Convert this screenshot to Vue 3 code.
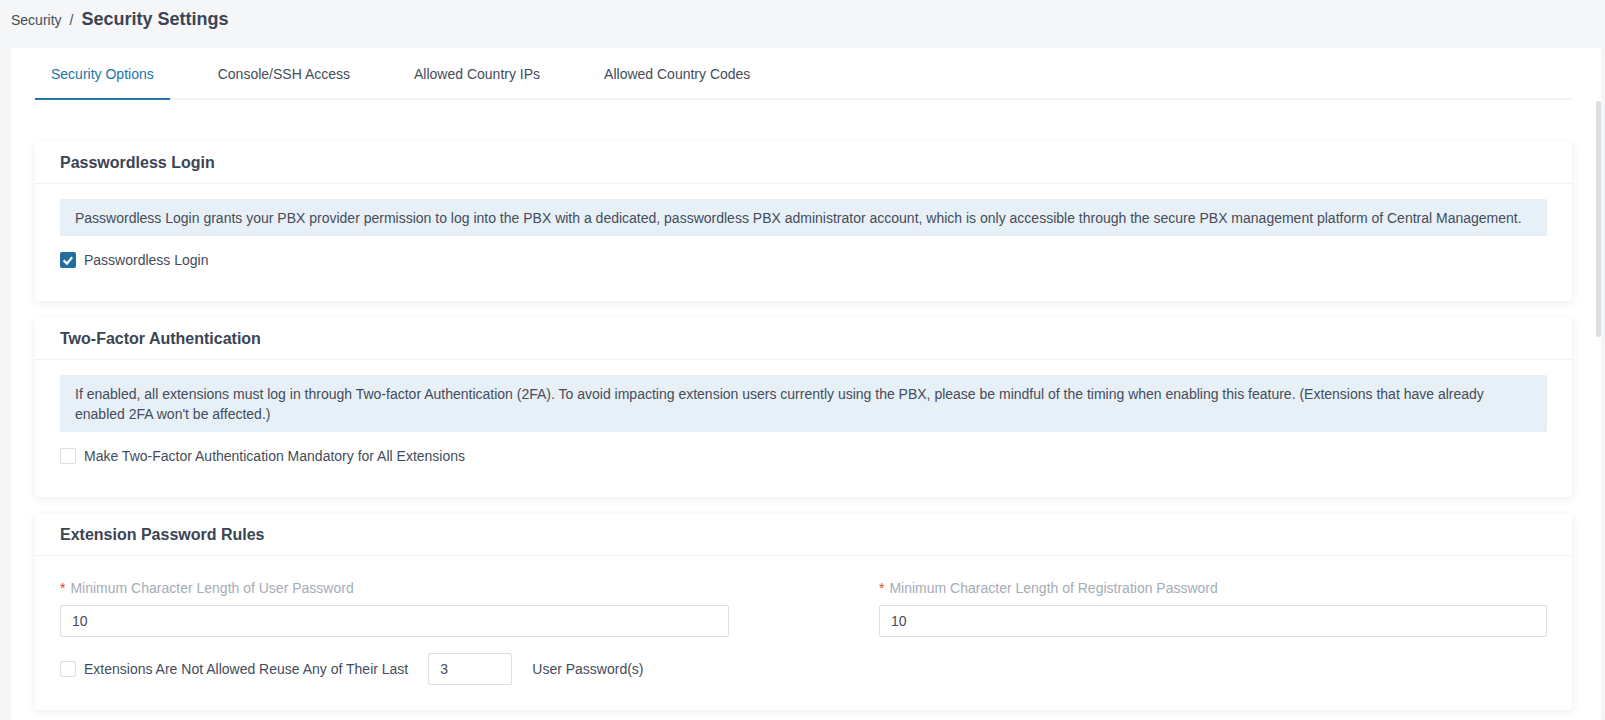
<script setup>
const tabs = ['Security Options', 'Console/SSH Access', 'Allowed Country IPs', 'Allowed Country Codes']
</script>

<template>
  <div class="page">
    <div class="crumbs">
      <span class="crumb">Security</span>
      <span class="sep">/</span>
      <span class="current">Security Settings</span>
    </div>
    <div class="panel">
      <div class="scroll-thumb"></div>
      <div class="tabs">
        <div v-for="(tab, i) in tabs" :key="tab" class="tab" :class="{ active: i === 0 }">{{ tab }}</div>
      </div>

      <section class="card first">
        <h3>Passwordless Login</h3>
        <div class="card-body">
          <div class="note">Passwordless Login grants your PBX provider permission to log into the PBX with a dedicated, passwordless PBX administrator account, which is only accessible through the secure PBX management platform of Central Management.</div>
          <label class="check">
            <span class="box on">
              <svg width="16" height="16" viewBox="0 0 16 16"><path d="M3.6 8.4 6.9 11.6l5.2-6.4" fill="none" stroke="#fff" stroke-width="2.2" /></svg>
            </span>
            Passwordless Login
          </label>
        </div>
      </section>

      <section class="card">
        <h3>Two-Factor Authentication</h3>
        <div class="card-body">
          <div class="note">If enabled, all extensions must log in through Two-factor Authentication (2FA). To avoid impacting extension users currently using the PBX, please be mindful of the timing when enabling this feature. (Extensions that have already enabled 2FA won't be affected.)</div>
          <label class="check">
            <span class="box"></span>
            Make Two-Factor Authentication Mandatory for All Extensions
          </label>
        </div>
      </section>

      <section class="card">
        <h3>Extension Password Rules</h3>
        <div class="card-body rules">
          <div class="fields">
            <div class="field">
              <div class="field-label"><span class="req">*</span>Minimum Character Length of User Password</div>
              <div class="input">10</div>
            </div>
            <div class="field">
              <div class="field-label"><span class="req">*</span>Minimum Character Length of Registration Password</div>
              <div class="input">10</div>
            </div>
          </div>
          <div class="reuse">
            <label class="check inline">
              <span class="box"></span>
              Extensions Are Not Allowed Reuse Any of Their Last
            </label>
            <div class="input small">3</div>
            <span>User Password(s)</span>
          </div>
        </div>
      </section>
    </div>
  </div>
</template>

<style scoped>
.page {
  height: 720px;
  overflow: hidden;
  background: #f5f6f8;
  font-family: "Liberation Sans", Arial, sans-serif;
  font-size: 14px;
  color: #444c5b;
}
.crumbs {
  height: 48px;
  padding: 0 0 9px 11px;
  box-sizing: border-box;
  display: flex;
  align-items: center;
}
.sep {
  margin: 0 8px;
}
.current {
  font-size: 18px;
  font-weight: 700;
  color: #3b4453;
}
.panel {
  position: relative;
  margin: 0 4px 0 11px;
  height: 672px;
  padding: 0 0 0 24px;
  background: #fff;
  border-radius: 3px;
}
.scroll-thumb {
  position: absolute;
  right: 0;
  top: 53px;
  width: 5px;
  height: 236px;
  border-radius: 3px;
  background: #dcdee2;
}
.tabs {
  display: flex;
  width: 1536px;
  height: 52px;
  box-sizing: border-box;
  border-bottom: 2px solid #f1f3f5;
}
.tab {
  padding: 0 16px;
  margin-right: 32px;
  height: 52px;
  line-height: 52px;
  box-sizing: border-box;
}
.tab.active {
  color: #2274a6;
  border-bottom: 2px solid #2274a6;
}
.card {
  width: 1537px;
  margin-top: 17px;
  background: #fff;
  border-radius: 3px;
  box-shadow: 0 2px 8px rgba(40, 50, 70, 0.09);
}
.card.first {
  margin-top: 42px;
}
h3 {
  margin: 0;
  height: 42px;
  line-height: 41px;
  padding-left: 25px;
  box-sizing: border-box;
  font-size: 16px;
  font-weight: 700;
  color: #3b4453;
  border-bottom: 1px solid #eff1f3;
}
.card-body {
  padding: 15px 25px 33px;
}
.note {
  padding: 9px 15px 8px;
  line-height: 20px;
  background: #e7f0f6;
  border-radius: 2px;
}
.check {
  display: flex;
  align-items: center;
  gap: 8px;
  margin-top: 16px;
  height: 16px;
}
.check.inline {
  margin-top: 0;
  margin-right: 20px;
}
.box {
  width: 16px;
  height: 16px;
  box-sizing: border-box;
  border: 1px solid #dcdfe4;
  border-radius: 2px;
  display: flex;
  align-items: center;
  justify-content: center;
}
.box.on {
  background: #216fa0;
  border: 0;
}
.rules {
  padding-top: 22px;
  padding-bottom: 25px;
}
.fields {
  display: flex;
  justify-content: space-between;
}
.field {
  width: 669px;
}
.field + .field {
  width: 668px;
}
.field-label {
  height: 20px;
  line-height: 20px;
  color: #a6acb6;
}
.req {
  color: #e8432e;
  margin-right: 5px;
}
.input {
  margin-top: 7px;
  height: 32px;
  line-height: 31px;
  padding: 0 11px;
  box-sizing: border-box;
  border: 1px solid #dcdfe4;
  border-radius: 2px;
}
.reuse {
  display: flex;
  align-items: center;
  margin-top: 16px;
}
.input.small {
  margin: 0 20px 0 0;
  width: 84px;
  line-height: 30px;
}
</style>

<style>
body {
  margin: 0;
}
</style>
